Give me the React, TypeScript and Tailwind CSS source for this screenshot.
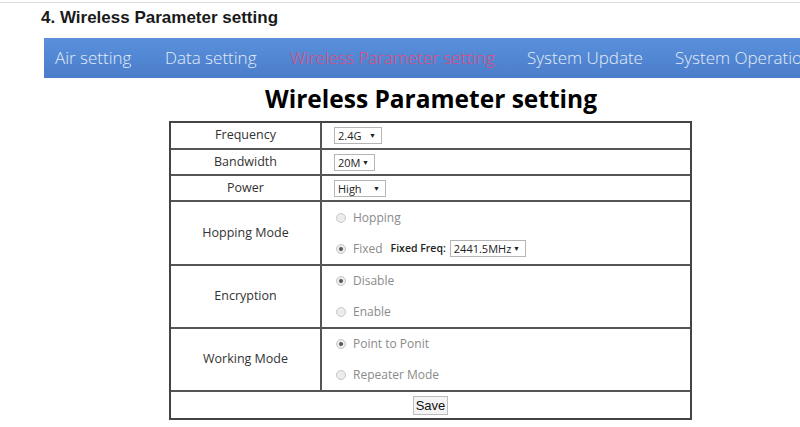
import React from 'react';

const NAV = [
  { label: 'Air setting', w: 'w-[110px]' },
  { label: 'Data setting', w: 'w-[125px]' },
  { label: 'Wireless Parameter setting', w: 'w-[237px]', active: true },
  { label: 'System Update', w: 'w-[148px]' },
  { label: 'System Operation', w: 'w-[160px]' },
];

function FakeSelect({ value, width }: { value: string; width: string }) {
  return (
    <span
      className={`inline-flex items-center justify-between h-[17px] ${width} border border-[#b5b5b5] bg-white pl-[3px] pr-[5px] text-[11px] leading-none text-[#222]`}
    >
      <span>{value}</span>
      <span className="text-[7px] text-[#222]">▼</span>
    </span>
  );
}

function Radio({ checked, label }: { checked?: boolean; label: string }) {
  return (
    <div className="flex items-center h-[16px] gap-[7px]">
      <span className="flex items-center justify-center w-[10px] h-[10px] rounded-full border border-[#c8c8c8] bg-[#ececec]">
        {checked && <span className="w-[4px] h-[4px] rounded-full bg-[#555]" />}
      </span>
      <span className="text-[12px] text-[#8a8a8a]">{label}</span>
    </div>
  );
}

function Row({
  label,
  height,
  first,
  children,
}: {
  label: string;
  height: string;
  first?: boolean;
  children: React.ReactNode;
}) {
  return (
    <div className={`flex ${height} ${first ? '' : 'border-t-2 border-[#555]'}`}>
      <div className="w-[151px] shrink-0 border-r-2 border-[#555] flex items-center justify-center text-[12.5px] text-[#333]">
        {label}
      </div>
      <div className="flex-1 pl-[12px] flex flex-col justify-center">{children}</div>
    </div>
  );
}

export default function App() {
  return (
    <div className="w-[800px] h-[427px] bg-white overflow-hidden" style={{ fontFamily: '"Open Sans", "Noto Sans", sans-serif' }}>
      <div className="h-[2px]" />
      <div className="h-px bg-[#dcdcdc]" />

      <h1
        className="pl-[41px] pt-[5px] text-[17px] font-bold text-[#1a1a1a] leading-[20px]"
        style={{ fontFamily: '"Liberation Sans", Arial, sans-serif' }}
      >
        4. Wireless Parameter setting
      </h1>

      {/* Nav bar */}
      <nav className="ml-[44px] mt-[10px] h-[40px] bg-gradient-to-b from-[#5a90dc] to-[#4a7dca] flex items-center pl-[11px] overflow-hidden whitespace-nowrap">
        {NAV.map((n) => (
          <span
            key={n.label}
            className={`${n.w} shrink-0 text-[17px] font-light ${n.active ? 'text-[#e14a7c]' : 'text-[#e4ecf8]'}`}
          >
            {n.label}
          </span>
        ))}
      </nav>

      <h2 className="text-center text-[24.5px] font-bold text-black leading-[30px] mt-[6px] pl-[62px]">
        Wireless Parameter setting
      </h2>

      {/* Settings table */}
      <div className="ml-[169px] mt-[7px] w-[523px] border-2 border-[#444]">
        <Row label="Frequency" height="h-[25px]" first>
          <FakeSelect value="2.4G" width="w-[48px]" />
        </Row>
        <Row label="Bandwidth" height="h-[26px]">
          <FakeSelect value="20M" width="w-[41px]" />
        </Row>
        <Row label="Power" height="h-[26px]">
          <FakeSelect value="High" width="w-[52px]" />
        </Row>
        <Row label="Hopping Mode" height="h-[64px]">
          <div className="flex flex-col gap-[15px] pl-[2px]">
            <Radio label="Hopping" />
            <div className="flex items-center h-[16px]">
              <Radio checked label="Fixed" />
              <span className="ml-[8px] text-[10.5px] font-semibold text-[#222]">Fixed Freq:</span>
              <span className="ml-[4px] flex">
                <FakeSelect value="2441.5MHz" width="w-[76px]" />
              </span>
            </div>
          </div>
        </Row>
        <Row label="Encryption" height="h-[63px]">
          <div className="flex flex-col gap-[15px] pl-[2px]">
            <Radio checked label="Disable" />
            <Radio label="Enable" />
          </div>
        </Row>
        <Row label="Working Mode" height="h-[63px]">
          <div className="flex flex-col gap-[15px] pl-[2px]">
            <Radio checked label="Point to Ponit" />
            <Radio label="Repeater Mode" />
          </div>
        </Row>
        <div className="h-[28px] border-t-2 border-[#555] flex items-center justify-center">
          <button
            className="h-[19px] px-[2px] border border-[#bdbdbd] bg-[#f4f4f4] text-[13px] leading-none text-[#111]"
            style={{ fontFamily: '"Liberation Sans", Arial, sans-serif' }}
          >
            Save
          </button>
        </div>
      </div>
    </div>
  );
}
